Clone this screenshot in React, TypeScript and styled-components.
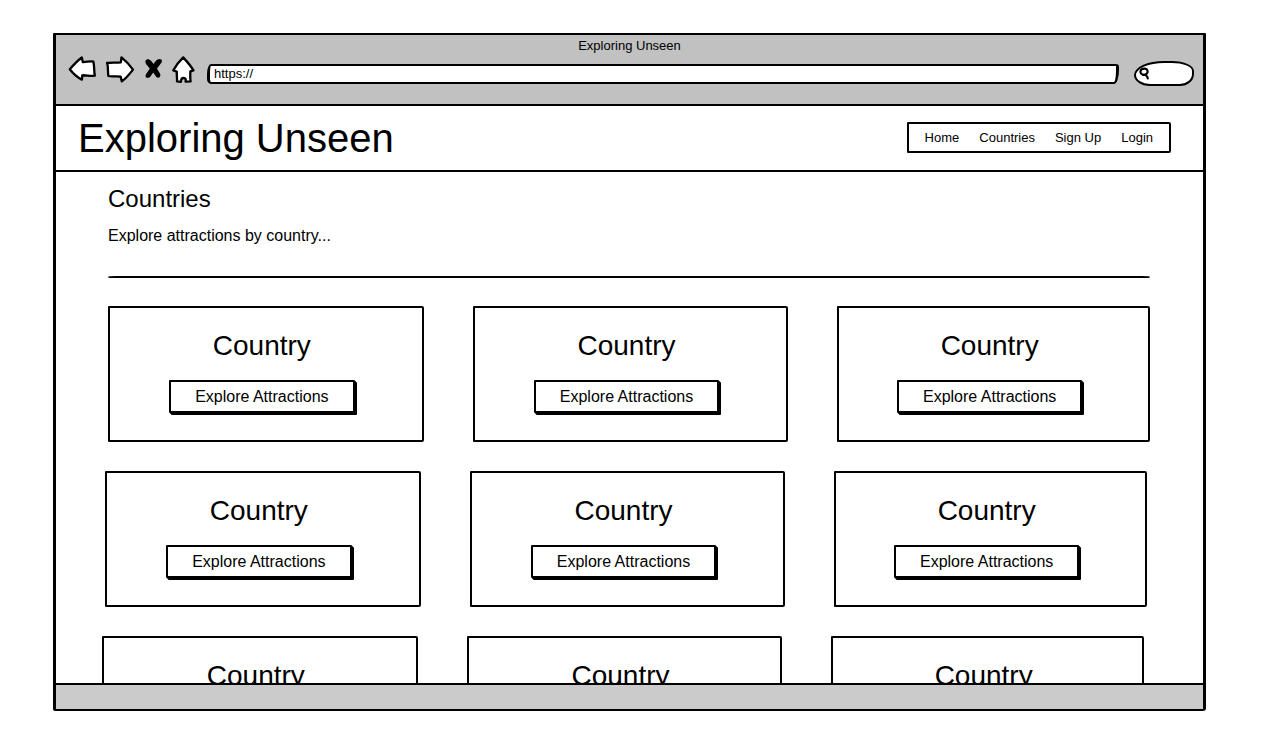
import React from "react";
import styled, { createGlobalStyle } from "styled-components";

const GlobalStyle = createGlobalStyle`
  *, *::before, *::after { box-sizing: border-box; }
  body {
    margin: 0;
    background: #fff;
    color: #000;
    font-family: "Liberation Sans", Arial, sans-serif;
    font-size: 16px;
  }
`;

const Page = styled.div`
  display: flex;
  height: 100vh;
  padding: 33px 60px 31px 53px;
`;

const BrowserWindow = styled.div`
  display: flex;
  flex: 1;
  flex-direction: column;
  min-width: 0;
  border: 2px solid #000;
  border-left-width: 3px;
  border-right-width: 3px;
  border-radius: 1px 1px 3px 2px;
`;

const Chrome = styled.div`
  padding-bottom: 18px;
  background: #c1c1c1;
  border-bottom: 2px solid #000;
`;

const WindowTitle = styled.div`
  font-size: 13px;
  line-height: 21px;
  text-align: center;
`;

const Toolbar = styled.div`
  display: flex;
  align-items: flex-end;
  padding: 0 9px 0 12px;
`;

const Tools = styled.div`
  display: flex;
  align-items: center;
  gap: 9px;
  margin-right: 12px;
  padding-bottom: 2px;
`;

const ToolButton = styled.button`
  display: block;
  padding: 0;
  border: 0;
  background: none;
  svg { display: block; }
`;

const AddressInput = styled.input`
  flex: 1;
  min-width: 0;
  height: 20px;
  margin-bottom: 2px;
  padding: 0 4px 2px;
  background: #fff;
  border: 2px solid #000;
  border-left-width: 3px;
  border-right-width: 3px;
  border-radius: 4px 3px 5px 4px / 10px 3px 14px 5px;
  color: #000;
  font: 13px "Liberation Sans", Arial, sans-serif;
  outline: 0;
`;

const SearchField = styled.label`
  display: flex;
  align-items: center;
  width: 60px;
  height: 25px;
  margin-left: 15px;
  padding-left: 3px;
  background: #fff;
  border: 2px solid #000;
  border-radius: 30px 22px 14px 16px / 14px 10px 12px 11px;
  svg { flex: none; }
`;

const SearchInput = styled.input`
  width: 100%;
  min-width: 0;
  padding: 0;
  border: 0;
  background: none;
  font: 13px "Liberation Sans", Arial, sans-serif;
  outline: 0;
`;

const Header = styled.header`
  display: flex;
  align-items: center;
  justify-content: space-between;
  padding: 8px 32px 8px 22px;
  border-bottom: 2px solid #000;
`;

const SiteTitle = styled.h1`
  margin: 0;
  font-size: 40px;
  font-weight: 400;
  line-height: 48px;
`;

const Nav = styled.nav`
  display: flex;
  gap: 20px;
  margin-bottom: 2px;
  padding: 0 16px;
  border: 2px solid #000;
  border-radius: 1px 2px 2px 1px;
`;

const NavLink = styled.a`
  color: #000;
  font-size: 13px;
  line-height: 27px;
  text-decoration: none;
  white-space: nowrap;
`;

const Content = styled.main`
  flex: 1;
  min-height: 0;
  padding: 12px 53px 0 52px;
  overflow: hidden;
`;

const Heading = styled.h2`
  margin: 0 0 10px;
  font-size: 24px;
  font-weight: 400;
  line-height: 30px;
`;

const Lead = styled.p`
  margin: 0;
  line-height: 24px;
`;

const Rule = styled.hr`
  height: 2px;
  margin: 28px 0;
  border: 0;
  border-radius: 8px 8px 2px 2px / 1px;
  background: #000;
`;

/* Each row sits a little further left than the one above, like a loose sketch. */
const CardRow = styled.div<{ $drift: number }>`
  display: grid;
  grid-template-columns: 315fr 315fr 312fr;
  gap: 49px;
  margin: 0 ${(p) => p.$drift}px 29px -${(p) => p.$drift}px;
`;

const Card = styled.section`
  display: flex;
  flex-direction: column;
  align-items: center;
  padding: 20px 8px 27px 0;
  border: 2px solid #000;
  border-radius: 1px 2px 2px 1px;
`;

const CardTitle = styled.h3`
  margin: 0 0 16px;
  font-size: 28px;
  font-weight: 400;
  line-height: 36px;
`;

const ExploreButton = styled.button`
  height: 33px;
  padding: 0 24px;
  background: #fff;
  border: 2px solid #000;
  border-radius: 1px;
  box-shadow: 1px 1px #000, 2px 2px #000;
  color: #000;
  font: 16px "Liberation Sans", Arial, sans-serif;
  white-space: nowrap;
`;

const Footer = styled.footer`
  height: 26px;
  background: #cbcbcb;
  border-top: 2px solid #000;
`;

const stroke = {
  fill: "#fff",
  stroke: "#000",
  strokeWidth: 2.3,
  strokeLinejoin: "round" as const,
  strokeLinecap: "round" as const,
};

const BackIcon = () => (
  <svg width="29" height="28" viewBox="0 0 29 28" {...stroke}>
    <path d="M1.8 13.3 C5 9.5 9 5 13.8 1.5 L14.8 6 C18 6.3 23 4.5 25.3 5.6 C26.4 9 26 16 26.8 19.6 C23 20.4 18 19 14.3 19.3 L13.9 23.7 C9.5 21.5 5 17.5 1.8 13.3 Z" />
  </svg>
);

const ForwardIcon = () => (
  <svg width="29" height="28" viewBox="0 0 29 28" {...stroke}>
    <path d="M0.8 7 C5 6.2 10 7 14.8 6.3 L15.5 1.4 C20 5 24 9.5 27 13.6 C24 17.5 20 22.5 15.8 25.3 L14.6 20.6 C10 19.8 6 21 2.4 20 C1.6 16 2.4 11 1.2 7 Z" />
  </svg>
);

const StopIcon = () => (
  <svg width="19" height="28" viewBox="0 0 19 28">
    <path
      d="M1.4 5 C2.5 2.4 5.4 3 7 4.8 L9.6 8 C11.5 5.4 13.5 2.6 15.8 3.2 C18.4 3.2 18.4 5.4 17 7.2 L13 12.5 L16.2 18 C17.2 21.2 14 23 12.2 20.8 L9.2 16.6 L6.4 20.4 C4.5 22.9 0.8 21.8 1.6 19.2 C2.6 16.8 4.4 15 5.8 12.5 C4.2 10.2 0.9 7.8 1.4 5 Z"
      fill="#000"
    />
  </svg>
);

const HomeIcon = () => (
  <svg width="23" height="28" viewBox="0 0 23 28" {...stroke}>
    <path d="M11.2 1.4 C14.5 5 18.8 9.6 21.4 14.4 L18.3 15.4 C18.4 18.6 18 22 18.6 25.3 L13.6 25.6 C13.8 23.6 14.2 22 11.4 22 C8.8 22 9.2 24 8.9 25.8 L5 25.4 C5.2 22 4.6 19 4.8 15.6 L1.3 14.4 C3.8 9.6 7.8 4.8 11.2 1.4 Z" />
  </svg>
);

const SearchIcon = () => (
  <svg width="11" height="13" viewBox="0 0 11 13" fill="none" stroke="#000" strokeWidth="2.2" strokeLinecap="round">
    <path d="M1.4 5 C1.4 2.4 3.4 1.4 6 1.6 C9 2 9.4 5.4 7.4 7 C5.2 8.6 1.6 7.8 1.4 5 Z M6.4 7.8 C7.6 8.6 8.8 9.6 8.8 11.4" />
  </svg>
);

const tools = [
  { label: "Back", Icon: BackIcon },
  { label: "Forward", Icon: ForwardIcon },
  { label: "Stop", Icon: StopIcon },
  { label: "Home page", Icon: HomeIcon },
];

const links = ["Home", "Countries", "Sign Up", "Login"];
const drifts = [0, 3, 6];
const columns = [0, 1, 2];

export default function App() {
  return (
    <>
      <GlobalStyle />
      <Page>
        <BrowserWindow>
          <Chrome>
            <WindowTitle>Exploring Unseen</WindowTitle>
            <Toolbar>
              <Tools>
                {tools.map(({ label, Icon }) => (
                  <ToolButton key={label} type="button" aria-label={label}>
                    <Icon />
                  </ToolButton>
                ))}
              </Tools>
              <AddressInput aria-label="Address" defaultValue="https://" />
              <SearchField>
                <SearchIcon />
                <SearchInput type="text" aria-label="Search" />
              </SearchField>
            </Toolbar>
          </Chrome>
          <Header>
            <SiteTitle>Exploring Unseen</SiteTitle>
            <Nav>
              {links.map((link) => (
                <NavLink key={link} href="#">
                  {link}
                </NavLink>
              ))}
            </Nav>
          </Header>
          <Content>
            <Heading>Countries</Heading>
            <Lead>Explore attractions by country...</Lead>
            <Rule />
            {drifts.map((drift) => (
              <CardRow key={drift} $drift={drift}>
                {columns.map((column) => (
                  <Card key={column}>
                    <CardTitle>Country</CardTitle>
                    <ExploreButton type="button">Explore Attractions</ExploreButton>
                  </Card>
                ))}
              </CardRow>
            ))}
          </Content>
          <Footer />
        </BrowserWindow>
      </Page>
    </>
  );
}
